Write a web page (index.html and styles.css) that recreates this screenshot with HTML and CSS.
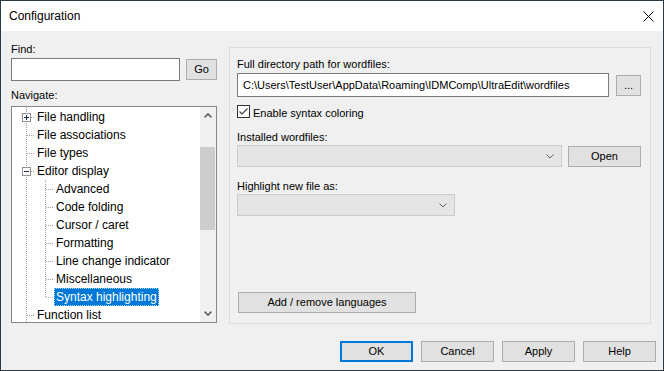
FILE: index.html
```html
<!DOCTYPE html>
<html>
<head>
<meta charset="utf-8">
<title>Configuration</title>
<link rel="stylesheet" href="styles.css">
</head>
<body>
<div class="window">
  <div class="titlebar">
    <span class="title">Configuration</span>
    <svg class="close" width="11" height="11" viewBox="0 0 11 11"><path d="M0.5 0.5L10.5 10.5M10.5 0.5L0.5 10.5" stroke="#000" stroke-width="1" fill="none"/></svg>
  </div>
  <div class="client">
    <div class="main">
      <div class="leftcol">
        <div class="label">Find:</div>
        <div class="findrow">
          <input class="edit find" type="text">
          <button class="btn go">Go</button>
        </div>
        <div class="label nav">Navigate:</div>
        <div class="tree">
          <div class="tree-list">
            <div class="node"><span class="gut g0"><svg class="exp" width="9" height="9" viewBox="0 0 9 9"><rect x="0.5" y="0.5" width="8" height="8" fill="#fff" stroke="#919191"/><path d="M2 4.5h5M4.5 2v5" stroke="#1d2b57"/></svg></span><span class="lbl">File handling</span></div>
            <div class="node"><span class="gut g0"></span><span class="lbl">File associations</span></div>
            <div class="node"><span class="gut g0"></span><span class="lbl">File types</span></div>
            <div class="node"><span class="gut g0"><svg class="exp" width="9" height="9" viewBox="0 0 9 9"><rect x="0.5" y="0.5" width="8" height="8" fill="#fff" stroke="#919191"/><path d="M2 4.5h5" stroke="#1d2b57"/></svg></span><span class="lbl">Editor display</span></div>
            <div class="node"><span class="gut g1"></span><span class="lbl">Advanced</span></div>
            <div class="node"><span class="gut g1"></span><span class="lbl">Code folding</span></div>
            <div class="node"><span class="gut g1"></span><span class="lbl">Cursor / caret</span></div>
            <div class="node"><span class="gut g1"></span><span class="lbl">Formatting</span></div>
            <div class="node"><span class="gut g1"></span><span class="lbl">Line change indicator</span></div>
            <div class="node"><span class="gut g1"></span><span class="lbl">Miscellaneous</span></div>
            <div class="node"><span class="gut g1 last"></span><span class="lbl sel">Syntax highlighting</span></div>
            <div class="node"><span class="gut g0"></span><span class="lbl">Function list</span></div>
          </div>
          <div class="vscroll">
            <div class="sb-btn"><svg width="8" height="5" viewBox="0 0 8 5"><path d="M0.6 4.4L4 1L7.4 4.4" stroke="#606060" stroke-width="1.7" fill="none"/></svg></div>
            <div class="sb-track"><div class="sb-thumb"></div></div>
            <div class="sb-btn"><svg width="8" height="5" viewBox="0 0 8 5"><path d="M0.6 0.6L4 4L7.4 0.6" stroke="#606060" stroke-width="1.7" fill="none"/></svg></div>
          </div>
        </div>
      </div>
      <div class="panel">
        <div class="label">Full directory path for wordfiles:</div>
        <div class="pathrow">
          <input class="edit path" type="text" value="C:\Users\TestUser\AppData\Roaming\IDMComp\UltraEdit\wordfiles">
          <button class="btn dots">...</button>
        </div>
        <div class="checkrow">
          <svg class="check" width="13" height="13" viewBox="0 0 13 13"><rect x="0.5" y="0.5" width="12" height="12" fill="#fff" stroke="#333"/><path d="M2.5 6.5L5 9L10.5 3.5" stroke="#3c3c3c" stroke-width="1.1" fill="none"/></svg>
          <span>Enable syntax coloring</span>
        </div>
        <div class="label lbl-installed">Installed wordfiles:</div>
        <div class="comborow">
          <div class="combo combo1"><svg width="8" height="5" viewBox="0 0 8 5"><path d="M0.5 0.5L4 4L7.5 0.5" stroke="#606060" stroke-width="1" fill="none"/></svg></div>
          <button class="btn open">Open</button>
        </div>
        <div class="label lbl-highlight">Highlight new file as:</div>
        <div class="combo combo2"><svg width="8" height="5" viewBox="0 0 8 5"><path d="M0.5 0.5L4 4L7.5 0.5" stroke="#606060" stroke-width="1" fill="none"/></svg></div>
        <button class="btn addbtn">Add / remove languages</button>
      </div>
    </div>
    <div class="buttons">
      <button class="btn bbtn default">OK</button>
      <button class="btn bbtn">Cancel</button>
      <button class="btn bbtn">Apply</button>
      <button class="btn bbtn">Help</button>
    </div>
  </div>
</div>
</body>
</html>
```

FILE: styles.css
```css
* { box-sizing: border-box; }
html, body { margin: 0; padding: 0; background: #f0f0f0; }
body {
  font-family: "Liberation Sans", Arial, sans-serif;
  font-size: 11px;
  color: #000;
}
.window {
  width: 664px;
  height: 371px;
  border: 1px solid #2b3a44;
  display: flex;
  flex-direction: column;
  background: #f0f0f0;
  overflow: hidden;
}
.titlebar {
  height: 30px;
  flex: none;
  background: #fff;
  display: flex;
  align-items: center;
  padding-left: 8px;
  padding-right: 9px;
}
.title { font-size: 12px; line-height: 30px; }
.close { margin-left: auto; display: block; }
.client { flex: 1; display: flex; flex-direction: column; }
.main { display: flex; align-items: flex-start; padding-left: 10px; }
.leftcol { width: 206px; margin-top: 10px; display: flex; flex-direction: column; }
.label { line-height: 16px; white-space: nowrap; }
.findrow { margin-top: 1px; height: 23px; display: flex; align-items: center; gap: 6px; }
.edit {
  font: inherit;
  color: #000;
  border: 1px solid #7a7a7a;
  background: #fff;
  margin: 0;
  padding: 0 0 0 5px;
  outline: none;
}
.find { width: 169px; height: 23px; }
.btn {
  font: inherit;
  color: #000;
  margin: 0;
  padding: 0;
  background: #e1e1e1;
  border: 1px solid #adadad;
  height: 21px;
  line-height: 19px;
  text-align: center;
  white-space: nowrap;
  flex: none;
}
.go { width: 31px; }
.nav { margin-top: 6px; }
.tree {
  margin-top: 3px;
  height: 217px;
  border: 1px solid #828790;
  background: #fff;
  display: flex;
}
.tree-list {
  flex: 1;
  overflow: hidden;
  padding-top: 1px;
  font-size: 12px;
  background-image: repeating-linear-gradient(to bottom, #a0a0a0 0 1px, transparent 1px 2px);
  background-size: 1px 100%;
  background-position: 14px 0;
  background-repeat: no-repeat;
}
.node { display: flex; height: 18px; line-height: 18px; white-space: nowrap; }
.gut { flex: none; height: 18px; background-repeat: no-repeat; }
.g0 {
  width: 23px;
  background-image: repeating-linear-gradient(to right, #a0a0a0 0 1px, transparent 1px 2px);
  background-size: 8px 1px;
  background-position: 15px 9px;
}
.g1 {
  width: 42px;
  background-image:
    repeating-linear-gradient(to right, #a0a0a0 0 1px, transparent 1px 2px),
    repeating-linear-gradient(to bottom, #a0a0a0 0 1px, transparent 1px 2px);
  background-size: 8px 1px, 1px 18px;
  background-position: 34px 9px, 33px 0;
  background-repeat: no-repeat;
}
.g1.last { background-size: 8px 1px, 1px 10px; }
.exp { display: block; margin: 5px 0 0 10px; }
.lbl { padding: 0 2px; height: 18px; }
.sel {
  background: #0078d7;
  color: #fff;
  outline: 1px dotted #a8d2f5;
  outline-offset: -1px;
}
.vscroll {
  flex: none;
  width: 16px;
  background: #f0f0f0;
  display: flex;
  flex-direction: column;
}
.sb-btn { height: 17px; flex: none; display: flex; align-items: center; justify-content: center; }
.sb-btn svg { display: block; }
.sb-track { flex: 1; }
.sb-thumb { margin-top: 23px; height: 83px; width: 15px; background: #cdcdcd; }
.panel {
  margin-top: 16px;
  margin-left: 12px;
  width: 422px;
  height: 277px;
  border: 1px solid #dcdcdc;
  padding: 8px 9px 10px 7px;
  display: flex;
  flex-direction: column;
}
.pathrow { margin-top: 1px; height: 24px; display: flex; align-items: center; gap: 7px; }
.path { width: 372px; height: 24px; }
.dots { width: 25px; }
.checkrow { margin-top: 8px; display: flex; align-items: flex-start; gap: 3px; line-height: 16px; }
.check { display: block; flex: none; }
.lbl-installed { margin-top: 8px; }
.comborow { display: flex; align-items: flex-start; gap: 6px; }
.combo {
  height: 22px;
  border: 1px solid #cccccc;
  background: #e5e5e5;
  display: flex;
  align-items: center;
  justify-content: flex-end;
  padding-right: 7px;
  flex: none;
}
.combo svg { display: block; }
.combo1 { width: 325px; }
.combo2 { width: 218px; }
.open { width: 73px; margin-top: 1px; }
.lbl-highlight { margin-top: 11px; }
.addbtn { margin-top: auto; margin-left: 1px; width: 178px; }
.buttons { margin-top: 17px; display: flex; justify-content: flex-end; gap: 8px; padding-right: 7px; }
.bbtn { width: 73px; }
.default { border-color: #0078d7; box-shadow: inset 0 0 0 1px #0078d7; }
```
